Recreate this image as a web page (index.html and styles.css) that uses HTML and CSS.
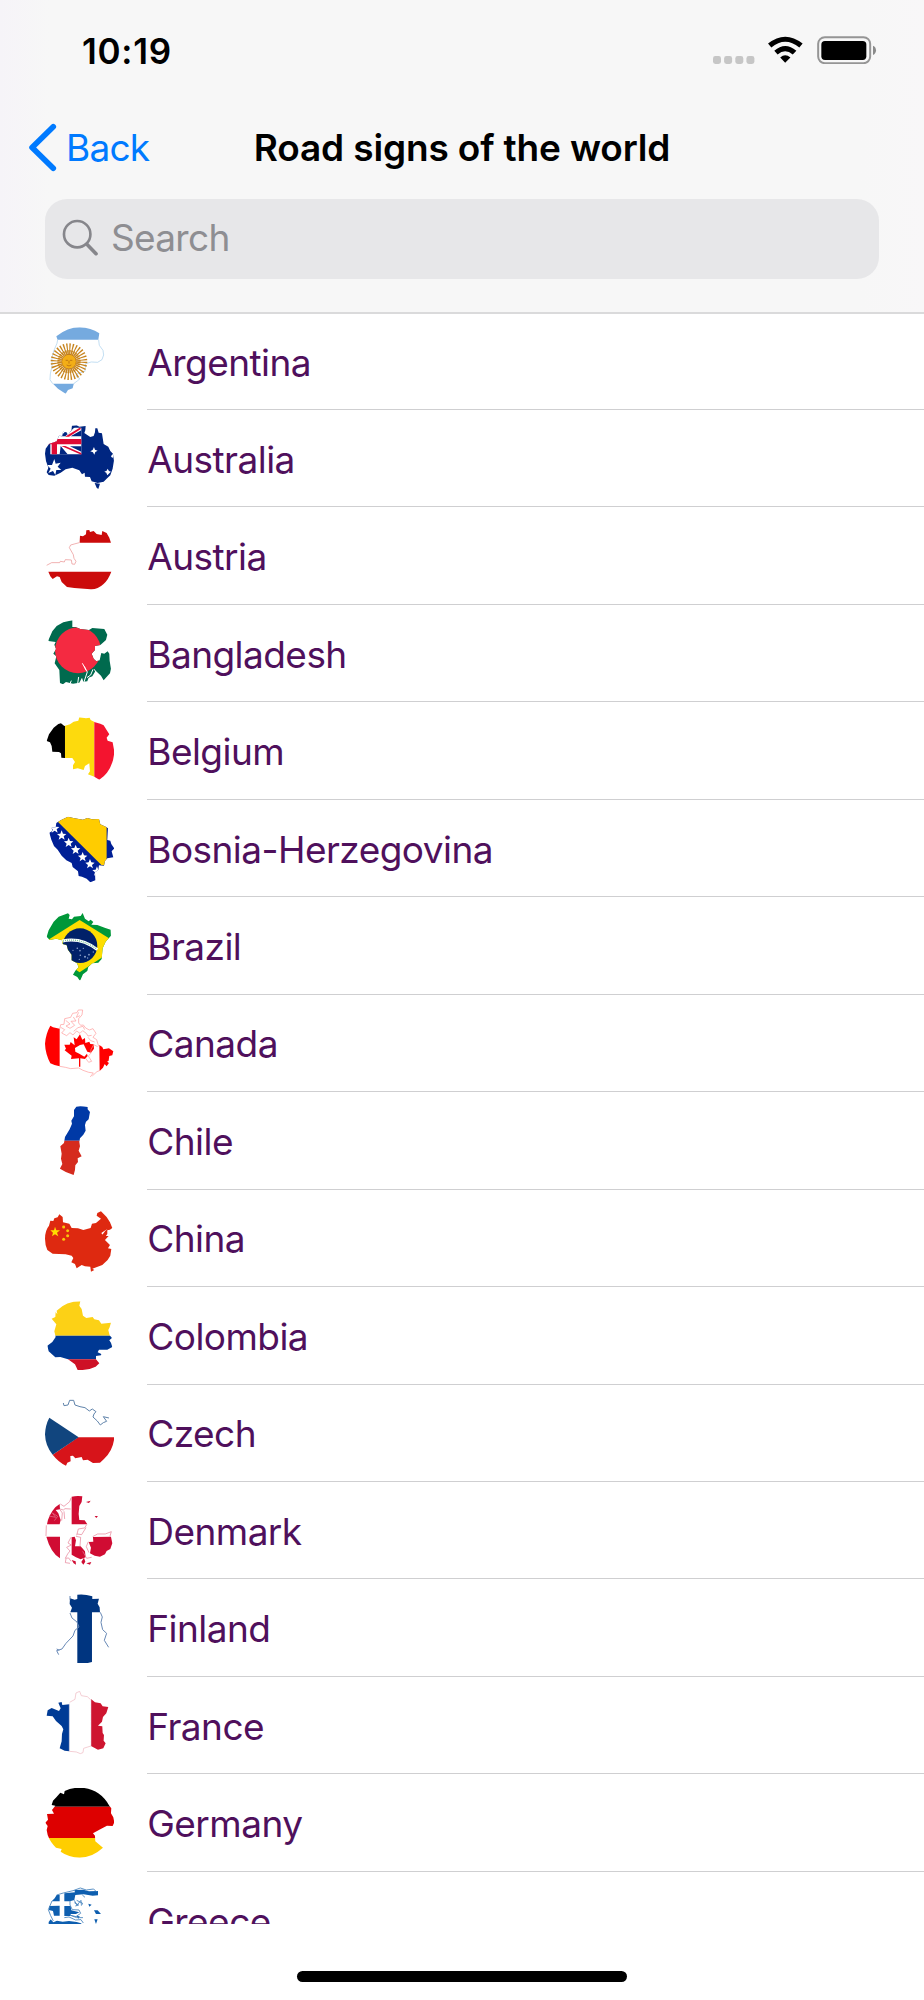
FILE: index.html
```html
<!DOCTYPE html>
<html lang="en">
<head>
  <meta charset="UTF-8" />
  <meta name="viewport" content="width=device-width, initial-scale=1.0" />
  <title>Road signs of the world</title>
  <link rel="stylesheet" href="styles.css">
</head>
<body>
  <div class="screen">
    <header class="header">
      <!-- Status bar -->
      <div class="status-bar">
        <span class="time">10:19</span>
        <div class="status-icons">
          <svg class="dots" viewBox="0 0 42 8"><g fill="#c6c6c6"><rect x="0" width="8" height="8" rx="2.4"/><rect x="11.1" width="8" height="8" rx="2.4"/><rect x="22.3" width="8" height="8" rx="2.4"/><rect x="33.4" width="8" height="8" rx="2.4"/></g></svg>
          <svg class="wifi" viewBox="917 109 106 82"><path d="M917 132Q969 90 1022 132L1012 144Q969 109 927 144ZM936 154Q969 124 1003 154L992 165Q969 146 946 165ZM954 174Q969 161 985 174L969 190Z"/></svg>
          <svg class="battery" viewBox="1064 108 180 84"><rect x="1067.5" y="111.5" width="156" height="78" rx="20" fill="none" stroke="#959595" stroke-width="6"/><rect x="1077" y="123" width="135" height="57" rx="11"/><path d="M1232 137Q1241 141 1241 151Q1241 161 1232 165Z" fill="#8a8a8a"/></svg>
        </div>
      </div>

      <!-- Navigation -->
      <nav class="nav-bar">
        <a class="back">
          <svg class="chevron" viewBox="84 370 86 146"><path d="M159 381L96 443L159 505" fill="none" stroke="#007aff" stroke-width="17" stroke-linecap="round" stroke-linejoin="round"/></svg>
          <span>Back</span>
        </a>
        <h1 class="title">Road signs of the world</h1>
      </nav>

      <div class="search">
        <svg class="search-icon" viewBox="186 658 110 112"><g fill="none" stroke="#86868b" stroke-linecap="round"><circle cx="231" cy="704" r="40" stroke-width="8"/><path d="M261 735L288 763" stroke-width="11"/></g></svg>
        <span>Search</span>
      </div>
    </header>

    <ul class="country-list">
      <li class="row">
        <svg class="flag" viewBox="44 49 208 208">
          <clipPath id="ar"><path d="M78 77Q112 50 148 50Q182 51 207 68L204 87L208 106L219 126L216 144L204 155L165 158L163 182L140 186L138 199L148 205L139 213L130 221L127 233L113 238L106 249L83 234L68 219L59 207L64 170L66 140L76 106L83 91Z"/></clipPath>
          <g clip-path="url(#ar)"><path fill="#fff" d="M44 49h208v208H44z"/><path fill="#75aadf" d="M44 49h208v38H44zM44 219h208v38H44z"/></g>
          <path d="M82 87L80 98L71 119L65 140L65 166L60 190L59 207L67 219M205 87L207 104L218 119L220 133L215 147L202 155L183 154L166 159L164 182L139 190L138 198L149 204L141 211L130 219" fill="none" stroke="#a5cdec" stroke-width="2"/>
          <circle cx="116" cy="153" r="39" fill="none" stroke="#c7841d" stroke-width="32" stroke-dasharray="3.3 4.35"/>
          <circle cx="116" cy="153" r="29" fill="none" stroke="#c7841d" stroke-width="12" stroke-dasharray="4 1.7"/>
          <circle cx="116" cy="153" r="22" fill="#f3ae17" stroke="#bb7514" stroke-width="3"/>
          <path d="M106 149h7M119 149h7M116 150v9M109 163q7 6 14 0" fill="none" stroke="#b56c11" stroke-width="2.5"/>
        </svg>
        <span class="name">Argentina</span>
      </li>
      <li class="row">
        <svg class="flag" viewBox="44 341 208 208">
          <clipPath id="au"><path d="M46 415L56 401L79 393L86 376L96 377L98 364L108 366L113 374L124 359L125 346L139 345L147 349L166 347L165 360L162 368L180 380L190 377L194 366L195 354L201 354L205 367L215 369L220 401L234 409L240 422L248 430L251 451L247 475L240 495L229 505L220 514L202 518L184 513L179 500L164 499L163 487L155 492L147 480L126 472L106 477L91 487L72 496L55 494L49 486L54 472L47 452L44 430ZM193 518L209 520L204 536L199 532Z"/></clipPath>
          <g clip-path="url(#au)">
            <path fill="#002681" d="M44 341h208v208H44z"/>
            <path fill="#fff" d="M60 352H153V432H60z"/>
            <path fill="#002681" d="M91 378L121 347H137L105 378ZM121 378L153 360V378ZM91 407L112 432H88ZM119 408L153 424V408Z"/>
            <path fill="#df0a35" d="M64 402V432H80V402H153V386H79V378H69V386H44V402ZM104 379L148 352L153 355L116 379ZM105 407L153 428V433L93 407Z"/>
            <path fill="#fff" d="M72 446L76 460L91 457L82 469L93 479L78 479L75 494L68 482L54 488L61 475L50 464L65 464ZM191 410L194 418L202 421L195 425L192 433L188 426L180 423L187 419ZM232 475L236 482L242 484L237 489L231 495L228 487L222 484L229 481ZM247 431L250 438L246 443L242 438Z"/>
          </g>
        </svg>
        <span class="name">Australia</span>
      </li>
      <li class="row">
        <svg class="flag" viewBox="44 33 208 208">
          <path fill="#cb0b0b" d="M148 95L149 74L158 76L167 70L168 58L177 57L179 63L190 60L199 69L214 72L216 60L229 66L237 80L242 95ZM54 182H243Q235 205 219 220Q202 236 181 235L132 231L110 228L94 213L88 198L80 196L67 204L60 196Z"/>
          <path d="M147 95L121 102L117 110L129 131L131 142L137 151L133 160L125 159L123 147L105 146L102 153L90 151L88 155L64 155L49 163" fill="none" stroke="#ea8c8c" stroke-width="2"/>
        </svg>
        <span class="name">Austria</span>
      </li>
      <li class="row">
        <svg class="flag" viewBox="44 326 208 208">
          <clipPath id="bd"><path d="M54 390L66 363L79 347L99 336L126 330L126 350L136 350L150 356L176 359L186 353L222 356L231 373L227 389L217 398L210 404L194 407L194 419L184 430L190 445L198 453L208 450L213 428L222 430L232 423L237 430L238 451L242 475L239 489L220 510L212 496L196 481L186 498L175 502L171 513L159 514L155 502L147 517L128 520L107 515L98 522L89 518L87 479L73 459L78 438L69 430L77 416L72 403L76 395L54 392Z"/></clipPath>
          <g clip-path="url(#bd)"><path fill="#006a4e" d="M44 326h208v208H44z"/><circle cx="143" cy="420" r="69" fill="#f42a41"/></g>
          <path d="M156 459L171 485L161 515M162 468L167 480M188 477L181 494L170 502M142 520L145 500M192 477L204 498M119 520L123 511" fill="none" stroke="#fff" stroke-width="3"/>
        </svg>
        <span class="name">Bangladesh</span>
      </li>
      <li class="row">
        <svg class="flag" viewBox="44 33 208 208">
          <clipPath id="be"><path d="M49 108L56 88L70 68L84 57L92 55L102 63L119 58L130 50L144 47L147 37L167 40L178 38L181 45L194 52L210 56L220 61L237 88L229 98L232 107L247 112L252 139Q250 177 230 203Q221 215 207 224L192 215L173 208L179 199L177 175L164 183L160 195L142 190L128 193L128 181L134 171L126 159L104 159L93 158L92 145L86 141L66 140L64 123L59 112Z"/></clipPath>
          <g clip-path="url(#be)"><path d="M44 33h60v208H44z"/><path fill="#fdda0d" d="M104 33h88v208h-88z"/><path fill="#f4142f" d="M192 33h60v208h-60z"/></g>
        </svg>
        <span class="name">Belgium</span>
      </li>
      <li class="row">
        <svg class="flag" viewBox="44 325 208 208">
          <clipPath id="ba"><path d="M57 381L66 376L64 366L76 365L78 352L91 344L113 333L129 337L158 342L171 337L185 341L206 340L210 356L226 363L233 368L232 385L231 403L240 405L243 415L252 428L244 437L249 455L231 458L224 466L221 480L206 479L204 493L194 500L195 524L180 530L169 519L155 513L145 511L143 497L127 484L124 472L108 464L94 450L82 432L71 421L63 402Z"/></clipPath>
          <g clip-path="url(#ba)">
            <path fill="#001f95" d="M44 325h208v208H44z"/><path fill="#fc0" d="M59 325L214 479L229 479V325Z"/>
            <g fill="#fff"><path id="ba-star" d="M94 374L98 384L108 385L100 392L103 402L94 396L85 402L88 392L80 385L90 384Z"/><use href="#ba-star" x="-21" y="-21"/><use href="#ba-star" x="21" y="22"/><use href="#ba-star" x="42" y="43"/><use href="#ba-star" x="63" y="65"/><use href="#ba-star" x="85" y="86"/><use href="#ba-star" x="106" y="108"/></g>
          </g>
        </svg>
        <span class="name">Bosnia-Herzegovina</span>
      </li>
      <li class="row">
        <svg class="flag" viewBox="44 33 208 208">
          <clipPath id="br"><path d="M49 110L55 91L70 65L85 50L113 40L118 45L115 56L125 58L131 50L151 48L157 39L164 56L175 64L181 59L189 66L183 74L201 75L223 83L241 89L242 107L226 125L217 145L214 177L204 188L186 190L174 201L171 213L158 223L149 243L141 231L128 224L135 212L145 202L140 190L124 181L124 164L113 149L109 135L97 132L95 121L78 116L58 120Z"/></clipPath>
          <g clip-path="url(#br)">
            <path fill="#009739" d="M44 33h208v208H44z"/><path fill="#fedd00" d="M148 60L270 136L148 217L26 137Z"/>
            <circle cx="149" cy="137" r="52" fill="#012169"/>
            <path d="M96 123Q153 111 201 149" fill="none" stroke="#fff" stroke-width="9"/><path d="M98 123Q153 112 200 148" fill="none" stroke="#7bc49a" stroke-width="4" stroke-dasharray="3 3"/>
            <g fill="#8fa3cc"><circle cx="141" cy="145" r="2.4"/><circle cx="149" cy="152" r="2.4"/><circle cx="159" cy="145" r="2"/><circle cx="150" cy="166" r="2.4"/><circle cx="164" cy="170" r="3"/><circle cx="176" cy="164" r="2.5"/><circle cx="189" cy="156" r="2"/><circle cx="147" cy="178" r="2"/><circle cx="172" cy="174" r="2"/><circle cx="128" cy="151" r="2"/></g>
          </g>
        </svg>
        <span class="name">Brazil</span>
      </li>
      <li class="row">
        <svg class="flag" viewBox="44 325 208 208">
          <path fill="#f00" d="M88 497Q71 494 60 488Q45 459 44 429Q46 400 60 375L68 380L88 384ZM207 433L216 439L219 446L236 443L249 452L246 464L237 466L235 480L225 486L218 501L208 511ZM221 488L228 481L236 487L229 497ZM149 401L156 417L164 412L165 427L177 423L180 430L190 431L191 444L182 456L171 453L160 431L149 433L134 442L135 453L147 459L162 468L170 459L172 466L164 475L150 473V498H146V473L122 475L124 465L103 449L107 444L102 432L118 432L121 424L133 434L130 410L139 416Z"/>
          <path d="M88 385L91 372L101 371L103 354L121 350L127 338L140 336L144 328L157 328L155 343L145 354L145 367L151 374L159 373L166 382L177 388L188 384L197 398L188 410L199 417L205 437M91 380L103 387L94 397L109 405L119 396L128 403L139 391L149 398L157 390L168 398L173 406L184 404M106 359L119 370L107 376L119 383L133 374L122 362L137 361L129 349M145 335L138 350L149 345M163 387L158 377L143 381L130 392M173 410L181 420L193 424M202 438L190 432L182 447L181 459L174 466L184 482L175 485L165 472M88 497L105 500L121 504L145 502L158 509L175 515L189 517L180 529M186 526L200 513L208 510" fill="none" stroke="#f99" stroke-width="2"/>
        </svg>
        <span class="name">Canada</span>
      </li>
      <li class="row">
        <svg class="flag" viewBox="44 33 208 208">
          <clipPath id="cl"><path d="M138 35Q150 32 172 36L172 43L179 51L175 73L167 80L164 90L166 107L159 119L149 130L147 140L149 154L145 167L154 184L142 190L143 201L135 211L134 225L130 240Q105 232 89 221L96 207L92 191L94 176L90 154L101 144L104 126L118 103L125 86L123 77L131 64L131 45Z"/></clipPath>
          <g clip-path="url(#cl)"><path fill="#0039a6" d="M44 33h208v104H44z"/><path fill="#d52b1e" d="M44 137h208v104H44z"/></g>
        </svg>
        <span class="name">Chile</span>
      </li>
      <li class="row">
        <svg class="flag" viewBox="44 325 208 208">
          <path fill="#de2910" d="M44 429Q44 404 56 390L60 375L69 376L72 368L82 365L87 356L97 364L98 380L117 384L124 397L143 398L159 403L181 397L185 384L197 382L212 369L199 360L201 352L212 347L229 364L239 380L246 397L239 402L231 404L231 415L225 423L214 420L224 407L232 399L213 412L219 420L235 421L224 433L239 448L233 458L243 460L240 480L232 493L216 508L200 514L186 519L192 523L182 528L180 513L164 512L154 508L139 518L134 505L123 500L129 487L124 480L106 476L87 475L67 474L51 463Q44 447 44 429Z"/>
          <path fill="#ffde00" d="M74 393L78 404L89 404L80 411L84 422L74 416L65 422L68 411L60 404L71 404Z"/>
          <g fill="#f9c80a"><circle cx="100" cy="394" r="4.5"/><circle cx="112" cy="405" r="4.5"/><circle cx="112" cy="420" r="4.5"/><circle cx="100" cy="431" r="4.5"/></g>
        </svg>
        <span class="name">China</span>
      </li>
      <li class="row">
        <svg class="flag" viewBox="44 33 208 208">
          <clipPath id="co"><path d="M79 62Q108 34 150 34L147 47L154 57L158 77L168 84L187 81L192 88L206 91L213 101L242 98L238 112L234 120L238 136L245 144L237 151L242 158L246 171L231 179L206 179L202 187L213 192L212 196L197 198L197 208L207 220L196 230Q172 242 142 240L134 223L113 208L90 201L75 202L55 184L51 167L66 156L76 141L72 124L78 103L64 86L75 81L76 66L81 73Z"/></clipPath>
          <g clip-path="url(#co)"><path fill="#fcd116" d="M44 33h208v104H44z"/><path fill="#003893" d="M44 137h208v71H44z"/><path fill="#ce1126" d="M44 208h208v33H44z"/></g>
        </svg>
        <span class="name">Colombia</span>
      </li>
      <li class="row">
        <svg class="flag" viewBox="44 325 208 208">
          <path fill="#d7141a" d="M144 440H252Q249 479 221 505L209 516L188 517L172 507L158 509L154 499L135 503L128 495L120 496L121 512L111 516L107 525Q84 514 67 492Z"/>
          <path fill="#11457e" d="M57 381L145 440L67 492Q45 466 44 431Q45 403 57 381Z"/>
          <path d="M99 337L101 345L113 343L118 329L130 329L134 343L149 348L164 351L177 361L186 355L197 363L191 370L188 379L201 391L210 403L219 396L229 392L219 378L236 382" fill="none" stroke="#5f83aa" stroke-width="3"/>
        </svg>
        <span class="name">Czech</span>
      </li>
      <li class="row">
        <svg class="flag" viewBox="44 33 208 208">
          <path fill="#d00c33" d="M124 35Q139 32 156 34L154 51L147 63L145 87L147 105L163 106L171 118H124ZM50 118Q54 91 75 67L88 57L89 73L76 75L84 85L91 105L88 118ZM48 155H89V220Q61 203 48 155ZM124 157L133 155L137 166L134 184L151 184L164 199L166 217L151 223L137 217L124 209ZM175 171L189 170L188 156L242 155L246 175L240 192L229 198L224 208L209 215L193 212L179 205L182 188ZM124 225L136 229L137 239L130 235ZM153 231L161 218L165 230L159 239ZM167 51L181 47L176 54ZM193 93H203L198 99ZM168 235L183 231L179 239Z"/>
          <path d="M90 57L101 64L118 50L122 39M89 72L99 75L104 71L121 72M89 74L96 84L94 107M101 79L103 102M56 93L76 97L66 84L82 94L72 107M139 151L144 132L163 129L169 119M167 128L154 149L140 147M137 154L151 157L149 184M122 157L113 174L123 180L109 187L119 198L112 207L105 220L115 219L122 229M107 221L105 233L119 235M174 170L168 185L176 203M187 155L202 147L225 147L243 140L239 154M157 199L169 220L184 217M48 121L47 153" fill="none" stroke="#e67a91" stroke-width="2"/>
        </svg>
        <span class="name">Denmark</span>
      </li>
      <li class="row">
        <svg class="flag" viewBox="44 325 208 208">
          <path fill="#003580" d="M141 327Q162 324 186 332V340L206 339L202 354L208 365L209 380H185V529Q163 536 141 532V380H120L125 366L118 355L119 338L133 342L141 340Z"/>
          <path d="M119 331L119 342M119 382L125 397L140 409L146 424L134 434L128 451L107 473L95 490L79 495L85 507M79 490L87 494M210 380L216 394L212 410L217 432L229 443L222 464L235 485" fill="none" stroke="#6688b5" stroke-width="3"/>
        </svg>
        <span class="name">Finland</span>
      </li>
      <li class="row">
        <svg class="flag" viewBox="44 33 208 208">
          <path fill="#003b96" d="M117 73V214L103 212L88 205L94 184L95 162L99 148L94 138L77 123L67 109L49 107L52 91L64 84L86 93L91 85L84 68L94 66L96 75Z"/>
          <path fill="#ce1530" d="M182 57L194 67L211 70L217 79L234 81L228 100L218 111L215 125L203 137L216 139L217 159L221 165L220 182L226 190L219 205L203 209L182 198Z"/>
          <path d="M118 67L134 58L137 39L148 34L153 47L171 50L181 59M117 214L138 216L150 221L158 218L160 205L182 198" fill="none" stroke="#efb7bf" stroke-width="2"/>
          <path d="M117 69V214M182 57V199" fill="none" stroke="#e8dfe8" stroke-width="1.5"/>
        </svg>
        <span class="name">France</span>
      </li>
      <li class="row">
        <svg class="flag" viewBox="44 325 208 208">
          <clipPath id="de"><path d="M68 363L78 353L90 339L101 344L103 334Q125 324 148 324Q207 325 237 378L243 386L242 401L249 413L252 428L247 439L230 438L210 449L188 461L194 468L195 485L218 504Q185 534 148 534Q115 533 91 516L94 508L77 504Q60 488 52 466L49 451L52 439L45 429L53 420L50 403L71 402L65 391L75 378L64 376Z"/></clipPath>
          <g clip-path="url(#de)"><path d="M44 320h208v61H44z"/><path fill="#d00" d="M44 381h208v94H44z"/><path fill="#ffce00" d="M44 475h208v60H44z"/></g>
        </svg>
        <span class="name">Germany</span>
      </li>
      <li class="row">
        <svg class="flag" viewBox="44 76 208 208">
          <path fill="#0d5eaf" d="M79 103H88V122H64L73 113ZM102 98L134 95L132 88L159 87L176 92L203 91L203 104L187 105L160 101L135 103L132 118L119 122H102ZM57 136L88 135V165H71L68 151L56 148ZM102 136H121L123 149L147 155L137 160L121 160V166H102ZM55 184L61 176L69 185L80 180L97 183L116 181L139 184L152 188L158 194H82L55 190ZM174 129L184 132L177 138ZM191 149L202 149L212 160L197 160ZM192 176L202 176L197 190ZM138 166L148 167L145 174Z"/>
          <path d="M65 121L54 147L61 165L69 181M79 103L99 97L128 90L150 82L168 88L190 85L199 94M119 120L119 133L126 147L146 148L151 158L137 168L121 164M132 126L145 133L135 136M139 119L157 128L153 135M102 171L116 169L136 178L152 177L159 187M132 119L140 134L152 119L153 132M121 164L139 171L158 171M156 103L164 110" fill="none" stroke="#3f7eba" stroke-width="2.5"/>
        </svg>
        <span class="name">Greece</span>
      </li>
    </ul>

    <div class="home-indicator"></div>
  </div>
</body>
</html>
```
FILE: styles.css
```css
* {
  box-sizing: border-box;
}

body {
  margin: 0;
  background: #fff;
  font-family: Inter, "Liberation Sans", sans-serif;
}

.screen {
  display: flex;
  flex-direction: column;
  width: 924px;
  height: 2000px;
  overflow: hidden;
}

.header {
  height: 314px;
  flex: none;
  background: linear-gradient(90deg, #f6f4f8 0, #f7f7f7 50px, #f7f7f7 860px, #f8f7f8 100%);
  border-bottom: 2px solid #dadadb;
}

.status-bar {
  display: flex;
  justify-content: space-between;
  height: 100px;
  padding: 32px 47px 0 82px;
}

.time {
  font-size: 35px;
  line-height: 38px;
  font-weight: 600;
  letter-spacing: 0.7px;
}

.status-icons {
  display: flex;
  align-items: flex-start;
  padding-top: 4px;
}

.dots {
  width: 42px;
  height: 8px;
  margin: 20px 13px 0 0;
}

.wifi {
  width: 35px;
  height: 27px;
  margin-right: 14px;
}

.battery {
  width: 60px;
  height: 28px;
}

.nav-bar {
  display: grid;
  grid-template-columns: 228px 1fr 228px;
  align-items: center;
  height: 99px;
  padding-bottom: 5px;
}

.back {
  display: flex;
  align-items: center;
  gap: 9px;
  padding-left: 28px;
  color: #007aff;
  font-size: 37px;
  letter-spacing: -0.8px;
}

.chevron {
  width: 29px;
  height: 49px;
}

.title {
  margin: 0;
  font-size: 37px;
  font-weight: 600;
  letter-spacing: -0.15px;
  text-align: center;
  white-space: nowrap;
}

.search {
  display: flex;
  align-items: center;
  gap: 12px;
  width: 834px;
  height: 80px;
  margin-left: 45px;
  padding: 0 17px 3px;
  border-radius: 22px;
  background: #e7e7e9;
  color: #8e8e92;
  font-size: 37px;
  letter-spacing: -0.7px;
}

.search-icon {
  width: 37px;
  height: 37px;
}

.country-list {
  height: 1610px;
  margin: 0;
  padding: 0;
  list-style: none;
  overflow: hidden;
}

.row {
  display: flex;
  align-items: center;
  height: 97.46px;
  padding-left: 44.7px;
}

.row:first-child {
  height: 96px;
}

.flag {
  width: 69.3px;
  height: 69.3px;
  flex: none;
  margin-right: 33.3px;
}

.name {
  display: flex;
  align-items: center;
  flex: 1;
  height: 100%;
  padding-top: 2px;
  border-bottom: 1px solid #cfcfd1;
  color: #4f105c;
  font-size: 37px;
  letter-spacing: -0.55px;
}

.home-indicator {
  width: 330px;
  height: 11px;
  margin: 47px auto 0;
  border-radius: 6px;
  background: #000;
}
```
